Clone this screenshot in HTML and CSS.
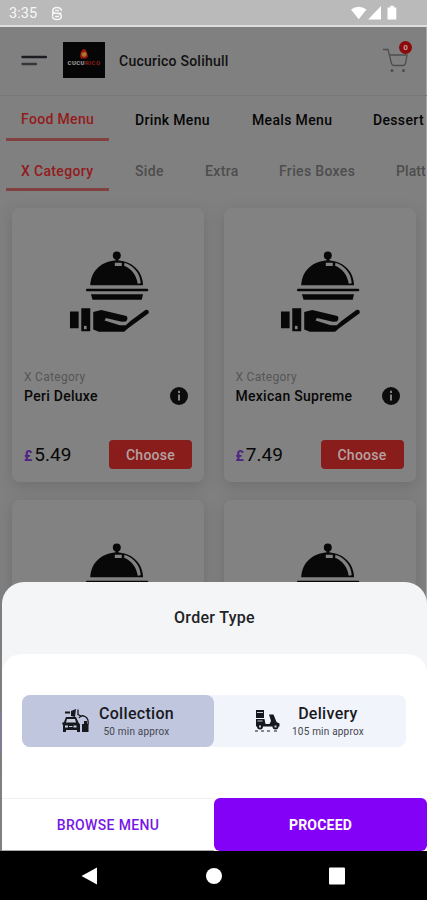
FILE: index.html
```html
<!DOCTYPE html>
<html lang="en">
<head>
<meta charset="utf-8">
<title>Cucurico Solihull</title>
<link rel="stylesheet" href="styles.css">
</head>
<body>
<svg width="0" height="0" class="defs">
  <symbol id="dish" viewBox="56 44 244 246">
    <circle cx="200" cy="60" r="12"/>
    <path d="M196 68h9v10h-9z"/>
    <path d="M120 150C121 104 158 75 200 75s78 29 79 75z"/>
    <path class="shine" d="M194 82h21v10h-21zM223 82c28 9 48 32 49 62l-9 1c-4-26-18-44-41-54z"/>
    <path d="M111 160h180q4 0 4 4t-4 4H111q-4 0-4-4t4-4zM122 177h157l-4 16H127z"/>
    <path d="M59 229h26v50H59zM93 219h27v69H93z"/>
    <path d="M129 230l24-6 76 18q7 8-2 17l-12 1-48-12-4 8 46 14 18 0 14-13 45-33q12-2 10 10l-62 45-12 11h-76l-17-7z"/>
    <path class="shine" d="M101 272h8v10h-8z"/>
  </symbol>
</svg>
<div class="phone">
  <div class="status">
    <span class="time">3:35</span>
    <svg class="app" width="12" height="15" viewBox="0 0 12 15"><path d="M10.500 4.800Q10 1.500 6 1.500T1.700 4.700Q1.700 7 6 7.300T10.300 10.200Q10.300 13.500 6 13.500T1.500 10.200M1.700 5v5M1.700 7.200h8.600M4 4.500h4M4 10.500h4"/></svg>
    <svg class="signals" width="50" height="16" viewBox="0 0 50 16"><path d="M1 4.500Q8.500-1 16.500 4.500L8.700 14.300zM31 1v13.500H18zM37.500 2.500h2.700V.7h3.600v1.800h2.500v12h-8.800z"/></svg>
  </div>
  <header class="top">
    <svg class="burger" width="27" height="12" viewBox="0 0 27 12"><path d="M2.500 2h23.500"/><path class="short" d="M2.500 9h13.500"/></svg>
    <div class="logo">
      <svg width="16" height="11" viewBox="0 0 16 11"><path class="comb" d="M4 8L5 3.500 7.500 1l2 .5 1.500 3 1 4-2 2H5z"/><path class="face" d="M5.500 5l4.500-1 .8 3-2.300 2-2.500-1z"/></svg>
      <div class="brand">CUCU<b>RICO</b></div>
    </div>
    <h1>Cucurico Solihull</h1>
    <div class="cart">
      <svg width="28" height="26" viewBox="0 0 28 26"><path d="M1 2.500h5l3.500 14q.5 2 2.500 2h9q2 0 2.500-2L25 8H7.200"/><circle cx="10" cy="23.500" r="1.500"/><circle cx="21.500" cy="23.500" r="1.500"/></svg>
      <span class="count">0</span>
    </div>
  </header>
  <nav class="tabs menus"><a class="on">Food Menu</a><a class="m2">Drink Menu</a><a class="m3">Meals Menu</a><a class="m4">Dessert</a></nav>
  <nav class="tabs cats"><a class="on">X Category</a><a class="c2">Side</a><a class="c3">Extra</a><a class="c4">Fries Boxes</a><a class="c5">Platt</a></nav>
  <main class="grid">
    <article class="card">
      <svg class="dish"><use href="#dish"/></svg>
      <p class="cat">X Category</p>
      <div class="row"><h2 class="n1">Peri Deluxe</h2><svg class="info" width="18" height="18" viewBox="0 0 18 18"><circle cx="9" cy="9" r="9"/><path d="M9 3.700v2.200M9 7.500v6"/></svg></div>
      <div class="row buy"><div class="price"><span>£</span>5.49</div><button>Choose</button></div>
    </article>
    <article class="card">
      <svg class="dish"><use href="#dish"/></svg>
      <p class="cat">X Category</p>
      <div class="row"><h2 class="n2">Mexican Supreme</h2><svg class="info" width="18" height="18" viewBox="0 0 18 18"><circle cx="9" cy="9" r="9"/><path d="M9 3.700v2.200M9 7.500v6"/></svg></div>
      <div class="row buy"><div class="price"><span>£</span>7.49</div><button>Choose</button></div>
    </article>
    <article class="card"><svg class="dish"><use href="#dish"/></svg></article>
    <article class="card"><svg class="dish"><use href="#dish"/></svg></article>
  </main>
  <div class="edge"></div>
  <section class="sheet">
    <h3>Order Type</h3>
    <div class="panel">
      <div class="options">
        <div class="option chosen">
          <svg width="29" height="26" viewBox="0 0 29 26"><path d="M4 3.500h5v2H4zM10 3l5-2-1 8-4-1zM5 9h10l2.500 5.500 1.500 2V24h-3v-2H5v2H2v-7L1 15l2-1z"/><path class="glass" d="M6 11h8l1 3.500H5zM4 17.500h3v2H4zM12.500 17.500h3v2h-3zM8 18h3.500v1H8z"/><path class="wire" d="M17 1.500v5l4 2M18 10q2-3.500 6-1.500t3 8"/><path d="M21 16h6.500v8H21zM23 13h3v3h-3z"/></svg>
          <div class="words"><strong>Collection</strong><small>50 min approx</small></div>
        </div>
        <div class="option">
          <svg width="27" height="22" viewBox="0 0 27 22"><path d="M2 0h8v8H2zM2 9h8.500l1 5h4l1.500-3-2-6.500h4.500l3 7.500 3 1.500v3H2z"/><circle cx="6" cy="16.500" r="3"/><circle cx="21.500" cy="16.500" r="3"/><path class="glass" d="M3 2h6v1H3zM5 15.500h2v2H5zM20.500 15.500h2v2h-2zM3.500 10.500h5v1h-5z"/><path d="M1 20.500h3v1H1zM7 20.500h3v1H7zM13 20.500h3v1h-3zM20 20.500h3v1h-3z"/></svg>
          <div class="words"><strong>Delivery</strong><small>105 min approx</small></div>
        </div>
      </div>
      <div class="actions"><button class="browse">BROWSE MENU</button><button class="proceed">PROCEED</button></div>
    </div>
  </section>
  <footer class="keys">
    <svg width="17" height="18" viewBox="0 0 17 18"><path d="M16 .5v17L.5 9z"/></svg>
    <svg width="16" height="18" viewBox="0 0 16 18"><circle cx="8" cy="9" r="8"/></svg>
    <svg width="16" height="18" viewBox="0 0 16 18"><rect y=".5" width="16" height="17" rx="1"/></svg>
  </footer>
</div>
</body>
</html>
```
FILE: styles.css
```css
* { box-sizing: border-box; margin: 0; }
body { font-family: Roboto, "Liberation Sans", sans-serif; background: #808080; overflow: hidden; }
svg { display: block; flex: none; }
.defs { position: absolute; }
button { border: 0; padding: 0; font: inherit; }
.phone { position: relative; width: 427px; height: 900px; overflow: hidden; background: linear-gradient(90deg, #808080 426px, #a8a8a8 426px); }
.status { height: 27px; background: #bababa; border-bottom: 2px solid #dedede; display: flex; align-items: center; padding: 1px 27px 0 9px; color: #f7f7f7; }
.time { font-size: 14.5px; width: 42px; letter-spacing: .1px; }
.app { fill: none; stroke: #f7f7f7; stroke-width: 1.5; }
.signals { margin-left: auto; fill: #fff; }
.top { height: 69px; border-bottom: 1px solid #797979; display: flex; align-items: center; padding: 0 13px 0 20px; }
.burger { stroke: #1d1d21; stroke-width: 2.4; stroke-linecap: round; }
.short { stroke: #37373b; }
.logo { width: 42px; height: 36px; margin-left: 16px; margin-top: -2px; background: #060606; padding-top: 6px; display: flex; flex-direction: column; align-items: center; }
.comb { fill: #9c1712; }
.face { fill: #a8782e; }
.brand { font-size: 6px; line-height: 7px; font-weight: 900; color: #989898; letter-spacing: .4px; }
.brand b { color: #811d18; }
h1 { font-size: 14px; font-weight: 500; margin-left: 14px; letter-spacing: .24px; color: #111; }
.cart { position: relative; margin-left: auto; width: 32px; height: 34px; padding-top: 6px; margin-top: -6px; left: -.5px; }
.cart svg { fill: none; stroke: #4d4d4d; stroke-width: 1.3; }
.cart circle { fill: #4d4d4d; stroke: none; }
.count { position: absolute; right: 1.5px; top: 0; width: 13px; height: 13px; border-radius: 50%; background: #8b0a0a; color: #c5a0a0; font-size: 8px; line-height: 13px; font-weight: 700; text-align: center; }
.tabs { display: flex; white-space: nowrap; font-size: 14px; font-weight: 500; letter-spacing: .34px; padding-left: 6px; overflow: hidden; }
.tabs a { flex: none; color: #060606; }
.menus { height: 45px; line-height: 48px; }
.cats { height: 51px; line-height: 61px; }
.tabs .on { color: #931b1c; width: 103px; padding-left: 15px; border-bottom: 3px solid #824040; }
.menus .on { height: 45px; line-height: 46px; }
.cats .on { height: 50px; line-height: 60px; }
.m2 { margin-left: 26px; width: 117px; }
.m3 { width: 121px; }
.cats .c2, .cats .c3, .cats .c4, .cats .c5 { color: #4d4d4d; }
.c2 { margin-left: 26px; width: 70px; }
.c3 { width: 74px; }
.c4 { width: 117px; }
.cats .c5 { letter-spacing: .1px; }
.grid { padding: 16px 11px 0 12px; display: grid; grid-template-columns: 192px 192px; grid-auto-rows: 274px; gap: 18px 19.5px; }
.card { background: #828282; border-radius: 7px; box-shadow: 0 4px 14px rgba(70, 70, 70, .3); padding: 42px 12px 0; }
.dish { width: 81px; height: 82px; margin-left: 44.5px; fill: #080808; }
.shine { fill: #828282; }
.cat { font-size: 12px; line-height: 16px; color: #565656; margin-top: 37px; letter-spacing: .3px; }
.row { display: flex; justify-content: space-between; align-items: center; }
.row h2 { font-size: 14px; line-height: 21px; font-weight: 500; letter-spacing: .28px; color: #080808; padding-top: 1px; }
.info { fill: #0c0c0c; stroke: #828282; stroke-width: 2; margin-right: 4px; }
.info circle { stroke: none; }
.buy { margin-top: 32px; height: 30px; }
.price { font-size: 19px; color: #080808; }
.price span { font-size: 14px; font-weight: 700; color: #4d2385; margin-right: 2px; }
.buy button { width: 83px; height: 29px; border-radius: 4px; background: #881d1b; color: #b5a1a1; font-size: 14px; font-weight: 500; letter-spacing: .25px; padding-top: 1px; }
.edge { position: absolute; left: 0; top: 712px; width: 3px; height: 42px; background: #817b94; }
.sheet { position: absolute; left: 2px; top: 582px; width: 425px; height: 269px; border-radius: 22px 22px 0 0; background: #f3f5f7; display: flex; flex-direction: column; }
h3 { height: 72px; line-height: 71px; text-align: center; font-size: 16px; font-weight: 500; color: #222326; letter-spacing: .3px; }
.panel { flex: 1; background: #fff; border-radius: 20px 20px 0 0; padding-top: 41px; display: flex; flex-direction: column; }
.options { display: flex; width: 384px; height: 52px; margin-left: 20px; background: #f2f4fc; border-radius: 8px; }
.option { flex: 1; display: flex; align-items: center; padding-left: 40px; fill: #17181d; }
.chosen { background: #bfc6de; border-radius: 8px; padding-left: 39px; }
.glass { fill: #c8cddf; }
.wire { fill: none; stroke: #17181d; stroke-width: 1.3; }
.words { display: flex; flex-direction: column; align-items: center; margin-left: 9px; padding-top: 2px; }
.option + .option .words { margin-left: 11px; }
.words strong { font-size: 16px; line-height: 20px; font-weight: 500; color: #191a1e; letter-spacing: .3px; }
.words small { font-size: 10px; line-height: 16px; color: #444650; letter-spacing: .2px; }
.chosen { flex: 0 0 192px; }
.actions { margin-top: auto; height: 53px; display: flex; }
.browse { width: 212px; background: #fff; color: #7518e6; border-top: 1px solid #f0f0f0; border-bottom: 1px solid #aaa; font-size: 14px; font-weight: 500; letter-spacing: .35px; }
.proceed { flex: 1; background: #8401f7; color: #fff; border-radius: 6px; font-size: 14px; font-weight: 700; letter-spacing: .2px; }
.keys { position: absolute; left: 0; top: 851px; width: 427px; height: 49px; background: #000; fill: #fff; display: flex; justify-content: space-between; align-items: center; padding: 0 82px 0 81px; }
```
